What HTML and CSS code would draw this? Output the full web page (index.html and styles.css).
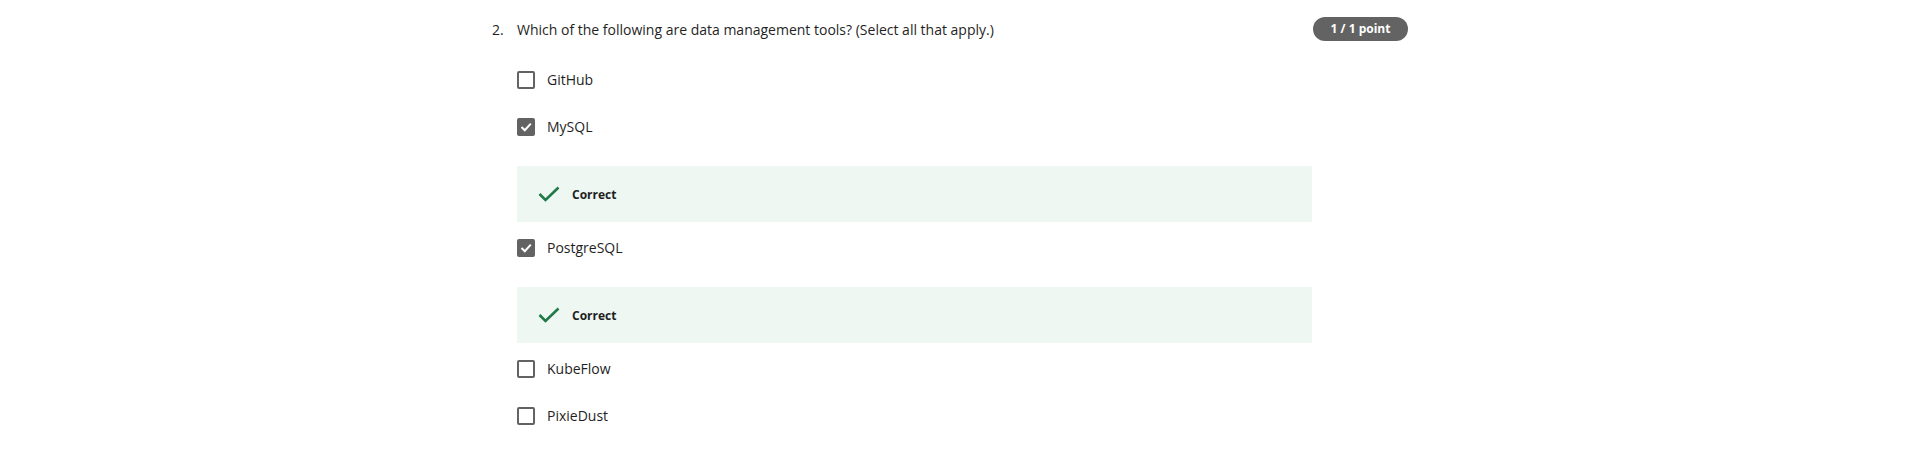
FILE: index.html
```html
<!DOCTYPE html>
<html>
<head>
<meta charset="utf-8">
<link rel="stylesheet" href="styles.css">
</head>
<body>
<div class="question">
  <div class="q-head">
    <span class="q-num">2.</span>
    <div class="q-text">Which of the following are data management tools? (Select all that apply.)</div>
    <span class="badge">1 / 1 point</span>
  </div>
  <div class="options">
    <div class="option">
      <span class="box"></span><span class="label">GitHub</span>
    </div>
    <div class="option">
      <span class="box checked"><svg viewBox="0 0 18 18" width="18" height="18"><path d="M4.5 9 L7.8 12.2 L13.8 5.6" fill="none" stroke="#fff" stroke-width="2"/></svg></span><span class="label">MySQL</span>
    </div>
    <div class="feedback">
      <svg class="tick" viewBox="0 0 22 16" width="22" height="16"><path d="M1.5 8 L7.5 14 L20.5 1.5" fill="none" stroke="#1f7a48" stroke-width="2.6"/></svg>
      <span class="fb-text">Correct</span>
    </div>
    <div class="option">
      <span class="box checked"><svg viewBox="0 0 18 18" width="18" height="18"><path d="M4.5 9 L7.8 12.2 L13.8 5.6" fill="none" stroke="#fff" stroke-width="2"/></svg></span><span class="label">PostgreSQL</span>
    </div>
    <div class="feedback">
      <svg class="tick" viewBox="0 0 22 16" width="22" height="16"><path d="M1.5 8 L7.5 14 L20.5 1.5" fill="none" stroke="#1f7a48" stroke-width="2.6"/></svg>
      <span class="fb-text">Correct</span>
    </div>
    <div class="option">
      <span class="box"></span><span class="label">KubeFlow</span>
    </div>
    <div class="option">
      <span class="box"></span><span class="label">PixieDust</span>
    </div>
  </div>
</div>
</body>
</html>
```
FILE: styles.css
```css
* { box-sizing: border-box; }
body {
  margin: 0;
  background: #fff;
  font-family: "Open Sans", "Liberation Sans", sans-serif;
  color: #1f1f1f;
}
.question {
  padding-top: 17px;
  padding-left: 492px;
}
.q-head {
  display: flex;
  align-items: flex-start;
}
.q-num {
  width: 25px;
  font-size: 14px;
  line-height: 20px;
  padding-top: 3px;
}
.q-text {
  width: 796px;
  font-size: 14px;
  line-height: 20px;
  padding-top: 3px;
}
.badge {
  width: 95px;
  height: 24px;
  border-radius: 12px;
  background: #636363;
  color: #fff;
  font-size: 12px;
  font-weight: 700;
  line-height: 24px;
  text-align: center;
}
.options {
  margin-left: 25px;
  margin-top: 15px;
  width: 795px;
}
.option {
  height: 47px;
  display: flex;
  align-items: center;
}
.box {
  width: 18px;
  height: 18px;
  border: 2px solid #636363;
  border-radius: 2px;
  margin-right: 12px;
  display: flex;
  align-items: center;
  justify-content: center;
  flex: none;
}
.box.checked {
  background: #636363;
}
.box svg { flex: none; }
.label {
  font-size: 14px;
  line-height: 20px;
}
.feedback {
  margin-top: 16px;
  height: 56px;
  background: #eef7f2;
  display: flex;
  align-items: center;
  padding-left: 21px;
}
.tick { margin-right: 12px; }
.fb-text {
  font-size: 12px;
  font-weight: 700;
  color: #1f1f1f;
}
.feedback + .option { margin-top: 2px; }
```
